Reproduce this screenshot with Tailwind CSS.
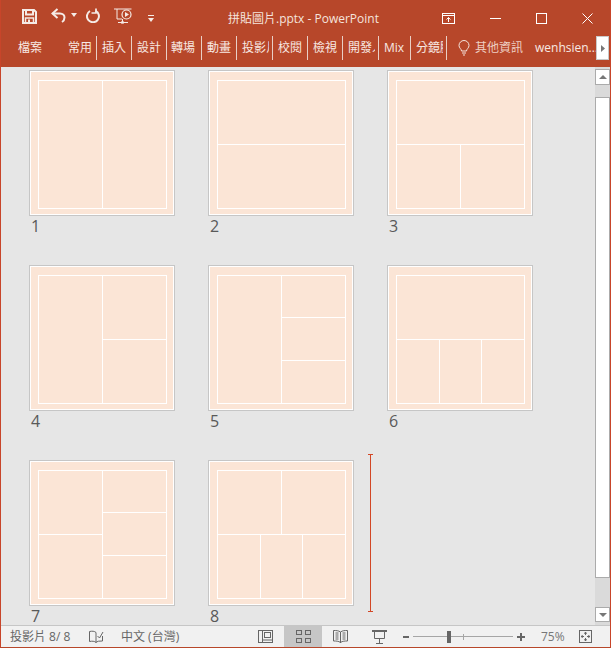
<!DOCTYPE html>
<html lang="zh-Hant">
<head>
<meta charset="utf-8">
<script src="https://cdn.jsdelivr.net/npm/@tailwindcss/browser@4"></script>
<title>拼貼圖片.pptx - PowerPoint</title>
</head>
<body class="m-0 overflow-hidden">
<div class="w-[611px] h-[648px] flex flex-col border-x border-b border-x-[#c8452a] border-b-[#b7472a] bg-[#e6e6e6] font-['Open_Sans','Noto_Sans_CJK_TC',sans-serif]">

  <!-- title bar + ribbon tabs -->
  <header class="h-[67px] shrink-0 bg-[#b7472a] text-[#f7e9e3] flex flex-col">
    <div class="h-[36px] flex items-center relative">
      <svg class="ml-[21px] w-[15px] h-[15px] shrink-0 -mt-[4px]" viewBox="0 0 15 15" fill="none" stroke="#f5ebe6" stroke-width="2"><path d="M1 1h11l2 2v11H1z"/><path d="M4 1v4.500h7V1" /><path d="M3.500 14V9h8v5" stroke-width="1.500"/><rect x="6" y="10.500" width="2" height="3" fill="#f5ebe6" stroke="none"/></svg>
      <svg class="ml-[14px] w-[15px] h-[15px] shrink-0 -mt-[6px]" viewBox="0 0 15 15" fill="none" stroke="#f5ebe6" stroke-width="2"><path d="M6.500 1 1.500 5.500 6.500 10"/><path d="M1.500 5.500h7.500c3 0 4.500 2 4.500 4s-1 3.500-2.500 4.500"/></svg>
      <svg class="ml-[5px] w-[6px] h-[4px] shrink-0 -mt-[6px]" viewBox="0 0 6 4" fill="#f5ebe6"><path d="M0 0h6L3 4z"/></svg>
      <svg class="ml-[9px] w-[14px] h-[15px] shrink-0 -mt-[5px]" viewBox="0 0 14 15" fill="none" stroke="#f5ebe6" stroke-width="2"><path d="M9.500 2.800a6 6 0 1 1-5.500.200"/><path d="M10 .5v4.500H5.500" stroke-width="1.700"/></svg>
      <svg class="ml-[14px] w-[18px] h-[16px] shrink-0 -mt-[4px]" viewBox="0 0 18 16" fill="none" stroke="#f5ebe6" stroke-width="1"><path d="M0 1h17.500"/><path d="M3 1v10h5"/><circle cx="12.500" cy="6.500" r="4.500" stroke-width="1.200"/><path d="M11 4l4 2.500-4 2.500z" fill="#f5ebe6" stroke="none"/><path d="M8.500 11v3M4 14.500h10"/><circle cx="8.500" cy="14.500" r="1.200"/></svg>
      <svg class="ml-[16px] w-[6px] h-[7px] shrink-0" viewBox="0 0 6 7" fill="#f5ebe6"><path d="M0 0h6v1H0zM0 3h6L3 7z"/></svg>
      <div class="absolute left-[227px] top-[11px] text-[12px] leading-[16px] whitespace-nowrap text-[#f5e4dd]">拼貼圖片.pptx - PowerPoint</div>
      <div class="ml-auto flex items-center">
        <svg class="w-[14px] h-[11px]" viewBox="0 0 14 11" fill="none" stroke="#fff"><rect x=".5" y=".5" width="12" height="10"/><path d="M.5 2.500h12"/><path d="M6.500 9V4.500M4.500 6.500l2-2 2 2"/></svg>
        <svg class="ml-[34px] w-[11px] h-[11px]" viewBox="0 0 11 11" stroke="#fff"><path d="M0 5.500h11"/></svg>
        <svg class="ml-[35px] w-[11px] h-[11px]" viewBox="0 0 11 11" fill="none" stroke="#fff"><rect x=".5" y=".5" width="10" height="10"/></svg>
        <svg class="ml-[35px] mr-[17px] w-[11px] h-[11px]" viewBox="0 0 11 11" fill="none" stroke="#fff"><path d="M.5.500l10 10M10.500.500l-10 10"/></svg>
      </div>
    </div>
    <nav class="h-[24px] flex items-center text-[12px] leading-[24px] whitespace-nowrap">
      <span class="pl-[17px] w-[61px] shrink-0">檔案</span>
      <span class="w-[35px] shrink-0 h-full border-r border-[#e9cfc6] pl-[6px]">常用</span>
      <span class="w-[35px] shrink-0 h-full border-r border-[#e9cfc6] pl-[5px]">插入</span>
      <span class="w-[35px] shrink-0 h-full border-r border-[#e9cfc6] pl-[5px]">設計</span>
      <span class="w-[35px] shrink-0 h-full border-r border-[#e9cfc6] pl-[4px]">轉場</span>
      <span class="w-[35px] shrink-0 h-full border-r border-[#e9cfc6] pl-[5px]">動畫</span>
      <span class="w-[36px] shrink-0 h-full border-r border-[#e9cfc6] pl-[5px]"><span class="block w-[27px] overflow-hidden">投影片</span></span>
      <span class="w-[35px] shrink-0 h-full border-r border-[#e9cfc6] pl-[5px]">校閱</span>
      <span class="w-[35px] shrink-0 h-full border-r border-[#e9cfc6] pl-[5px]">檢視</span>
      <span class="w-[36px] shrink-0 h-full border-r border-[#e9cfc6] pl-[5px]"><span class="block w-[27px] overflow-hidden">開發人</span></span>
      <span class="w-[32px] shrink-0 h-full border-r border-[#e9cfc6] pl-[5px]">Mix</span>
      <span class="w-[36px] shrink-0 h-full border-r border-[#e9cfc6] pl-[5px]"><span class="block w-[27px] overflow-hidden">分鏡腳</span></span>
      <svg class="ml-[11px] w-[12px] h-[16px] shrink-0" viewBox="0 0 12 16" fill="none" stroke="#f5e4dd"><path d="M3.500 11c0-2-2.500-3-2.500-5.500a5 5 0 0 1 10 0C11 8 8.500 9 8.500 11z"/><path d="M4 13h4M5 15h2"/></svg>
      <span class="ml-[5px] text-[#eecfc3]">其他資訊</span>
      <span class="ml-[12px] w-[61px] shrink-0">wenhsien...</span>
      <span class="w-[13px] h-[24px] shrink-0 bg-white border border-[#c9c9c9] flex items-center justify-center"><svg class="w-[4px] h-[7px]" viewBox="0 0 4 7" fill="#777"><path d="M0 0l4 3.500L0 7z"/></svg></span>
    </nav>
  </header>

  <!-- slide sorter -->
  <main class="relative flex-1 min-h-0 flex overflow-hidden">
    <div class="flex-1 pl-[28px] pt-[3px] grid grid-cols-[repeat(3,146px)] auto-rows-[195px] gap-x-[33px] text-[16px] leading-[20px] text-[#595959]">

      <div>
        <div class="w-[146px] h-[146px] border border-[#c6c6c6]"><div class="h-full border border-white bg-[#fbe5d6] pl-[7px] pt-[8px]">
          <div class="w-[129px] h-[129px] bg-white p-px gap-px grid grid-cols-2">
            <div class="bg-[#fbe5d6]"></div><div class="bg-[#fbe5d6]"></div>
          </div>
        </div></div>
        <div class="pl-[2px]">1</div>
      </div>

      <div>
        <div class="w-[146px] h-[146px] border border-[#c6c6c6]"><div class="h-full border border-white bg-[#fbe5d6] pl-[7px] pt-[8px]">
          <div class="w-[129px] h-[129px] bg-white p-px gap-px grid grid-rows-2">
            <div class="bg-[#fbe5d6]"></div><div class="bg-[#fbe5d6]"></div>
          </div>
        </div></div>
        <div class="pl-[2px]">2</div>
      </div>

      <div>
        <div class="w-[146px] h-[146px] border border-[#c6c6c6]"><div class="h-full border border-white bg-[#fbe5d6] pl-[7px] pt-[8px]">
          <div class="w-[129px] h-[129px] bg-white p-px gap-px grid grid-cols-2 grid-rows-2">
            <div class="bg-[#fbe5d6] col-span-2"></div><div class="bg-[#fbe5d6]"></div><div class="bg-[#fbe5d6]"></div>
          </div>
        </div></div>
        <div class="pl-[2px]">3</div>
      </div>

      <div>
        <div class="w-[146px] h-[146px] border border-[#c6c6c6]"><div class="h-full border border-white bg-[#fbe5d6] pl-[7px] pt-[8px]">
          <div class="w-[129px] h-[129px] bg-white p-px gap-px grid grid-cols-2 grid-rows-2">
            <div class="bg-[#fbe5d6] row-span-2"></div><div class="bg-[#fbe5d6]"></div><div class="bg-[#fbe5d6]"></div>
          </div>
        </div></div>
        <div class="pl-[2px]">4</div>
      </div>

      <div>
        <div class="w-[146px] h-[146px] border border-[#c6c6c6]"><div class="h-full border border-white bg-[#fbe5d6] pl-[7px] pt-[8px]">
          <div class="w-[129px] h-[129px] bg-white p-px gap-px grid grid-cols-2 grid-rows-[41px_42px_42px]">
            <div class="bg-[#fbe5d6] row-span-3"></div><div class="bg-[#fbe5d6]"></div><div class="bg-[#fbe5d6]"></div><div class="bg-[#fbe5d6]"></div>
          </div>
        </div></div>
        <div class="pl-[2px]">5</div>
      </div>

      <div>
        <div class="w-[146px] h-[146px] border border-[#c6c6c6]"><div class="h-full border border-white bg-[#fbe5d6] pl-[7px] pt-[8px]">
          <div class="w-[129px] h-[129px] bg-white p-px gap-px grid grid-cols-[42px_41px_42px] grid-rows-2">
            <div class="bg-[#fbe5d6] col-span-3"></div><div class="bg-[#fbe5d6]"></div><div class="bg-[#fbe5d6]"></div><div class="bg-[#fbe5d6]"></div>
          </div>
        </div></div>
        <div class="pl-[2px]">6</div>
      </div>

      <div>
        <div class="w-[146px] h-[146px] border border-[#c6c6c6]"><div class="h-full border border-white bg-[#fbe5d6] pl-[7px] pt-[8px]">
          <div class="w-[129px] h-[129px] bg-white p-px gap-px flex">
            <div class="w-[63px] grid grid-rows-2 gap-px"><div class="bg-[#fbe5d6]"></div><div class="bg-[#fbe5d6]"></div></div>
            <div class="w-[63px] grid grid-rows-[41px_42px_42px] gap-px"><div class="bg-[#fbe5d6]"></div><div class="bg-[#fbe5d6]"></div><div class="bg-[#fbe5d6]"></div></div>
          </div>
        </div></div>
        <div class="pl-[2px]">7</div>
      </div>

      <div>
        <div class="w-[146px] h-[146px] border border-[#c6c6c6]"><div class="h-full border border-white bg-[#fbe5d6] pl-[7px] pt-[8px]">
          <div class="w-[129px] h-[129px] bg-white p-px gap-px flex flex-col">
            <div class="h-[63px] grid grid-cols-2 gap-px"><div class="bg-[#fbe5d6]"></div><div class="bg-[#fbe5d6]"></div></div>
            <div class="h-[63px] grid grid-cols-[42px_41px_42px] gap-px"><div class="bg-[#fbe5d6]"></div><div class="bg-[#fbe5d6]"></div><div class="bg-[#fbe5d6]"></div></div>
          </div>
        </div></div>
        <div class="pl-[2px]">8</div>
      </div>
    </div>

    <!-- insertion marker -->
    <div class="absolute left-[367px] top-[387px] w-[5px] h-[158px] flex flex-col items-center justify-between">
      <div class="w-[5px] h-px bg-[#d24726]"></div>
      <div class="w-px flex-1 bg-[#d24726]"></div>
      <div class="w-[5px] h-px bg-[#d24726]"></div>
    </div>

    <!-- scrollbar -->
    <div class="w-[15px] shrink-0 bg-[#dadada] flex flex-col pt-[2px] pb-[3px]">
      <div class="h-[16px] shrink-0 bg-white border border-[#ababab] flex items-center justify-center"><svg class="w-[8px] h-[4px]" viewBox="0 0 8 4" fill="#777"><path d="M4 0l4 4H0z"/></svg></div>
      <div class="h-[481px] mt-[12px] shrink-0 bg-white border border-[#ababab]"></div>
      <div class="h-[15px] mt-auto shrink-0 bg-white border border-[#ababab] flex items-center justify-center"><svg class="w-[8px] h-[4px]" viewBox="0 0 8 4" fill="#777"><path d="M0 0h8L4 4z"/></svg></div>
    </div>
  </main>

  <!-- status bar -->
  <footer class="h-[22px] shrink-0 border-t border-[#c6c6c6] bg-[#f1f1f1] flex items-center text-[12px] text-[#666] whitespace-nowrap relative">
    <span class="ml-[9px] w-[66px] shrink-0">投影片 8/ 8</span>
    <svg class="ml-[13px] w-[15px] h-[14px] shrink-0" viewBox="0 0 15 14" fill="none" stroke="#666"><path d="M7 2.500C5.500 1 3 1 .5 1.500v10C3 11 5.500 11 7 12.500c.5-.6 1.500-1 2.500-1.300l4-.2V6"/><path d="M7 2.500v10"/><path d="M8.500 6l2 2 3.500-6"/></svg>
    <span class="ml-[17px] shrink-0">中文 (台灣)</span>
    <div class="ml-auto flex items-center h-full">
      <svg class="w-[15px] h-[13px] shrink-0" viewBox="0 0 15 13" fill="none" stroke="#666"><rect x=".5" y=".5" width="14" height="12"/><path d="M4.500.5v12"/><rect x="6.500" y="2.500" width="6" height="5"/><path d="M4.500 10h10"/></svg>
      <div class="ml-[11px] w-[38px] h-full bg-[#c6c6c6] flex items-center justify-center shrink-0">
        <svg class="w-[15px] h-[13px]" viewBox="0 0 15 13" fill="none" stroke="#666"><rect x=".5" y=".5" width="5" height="4"/><rect x="9.500" y=".5" width="5" height="4"/><rect x=".5" y="8.500" width="5" height="4"/><rect x="9.500" y="8.500" width="5" height="4"/></svg>
      </div>
      <svg class="ml-[11px] w-[15px] h-[14px] shrink-0" viewBox="0 0 15 14" fill="none" stroke="#666"><path d="M7.500 2C5.500.5 3 .5.500.5v10.500c2.500 0 5 0 7 1.500 2-1.500 4.500-1.500 7-1.500V.5c-2.500 0-5 0-7 1.500zM7.500 2v11"/><path d="M2.500 3h3M2.500 5h3M2.500 7h3M2.500 9h3M9.500 3h3M9.500 5h3M9.500 7h3M9.500 9h3"/></svg>
      <svg class="ml-[24px] w-[15px] h-[14px] shrink-0" viewBox="0 0 15 14" fill="none" stroke="#666"><path d="M0 1h15" stroke-width="2"/><path d="M2.500 1v7.500h10V1M7.500 8.500v5M4 13.500h7"/></svg>
      <span class="ml-[16px] w-[6px] h-[2px] bg-[#666] shrink-0"></span>
      <div class="ml-[4px] w-[100px] h-[14px] relative shrink-0 flex items-center">
        <div class="w-full h-px bg-[#a6a6a6]"></div>
        <div class="absolute left-[50px] top-[4px] w-px h-[6px] bg-[#a6a6a6]"></div>
        <div class="absolute left-[34px] top-[1px] w-[4px] h-[12px] bg-[#666]"></div>
      </div>
      <svg class="ml-[4px] w-[8px] h-[8px] shrink-0" viewBox="0 0 8 8" fill="#666"><path d="M3 0h2v3h3v2H5v3H3V5H0V3h3z"/></svg>
      <span class="ml-[16px] w-[26px] shrink-0 text-[#777]">75%</span>
      <svg class="ml-[12px] mr-[18px] w-[13px] h-[13px] shrink-0" viewBox="0 0 13 13" fill="none" stroke="#666"><rect x=".5" y=".5" width="12" height="12"/><path d="M6.500 2v3M5 3.200h3M6.500 8v3M5 9.800h3M2 6.500h3M3.200 5v3M8 6.500h3M9.800 5v3"/></svg>
    </div>
  </footer>
</div>
</body>
</html>
